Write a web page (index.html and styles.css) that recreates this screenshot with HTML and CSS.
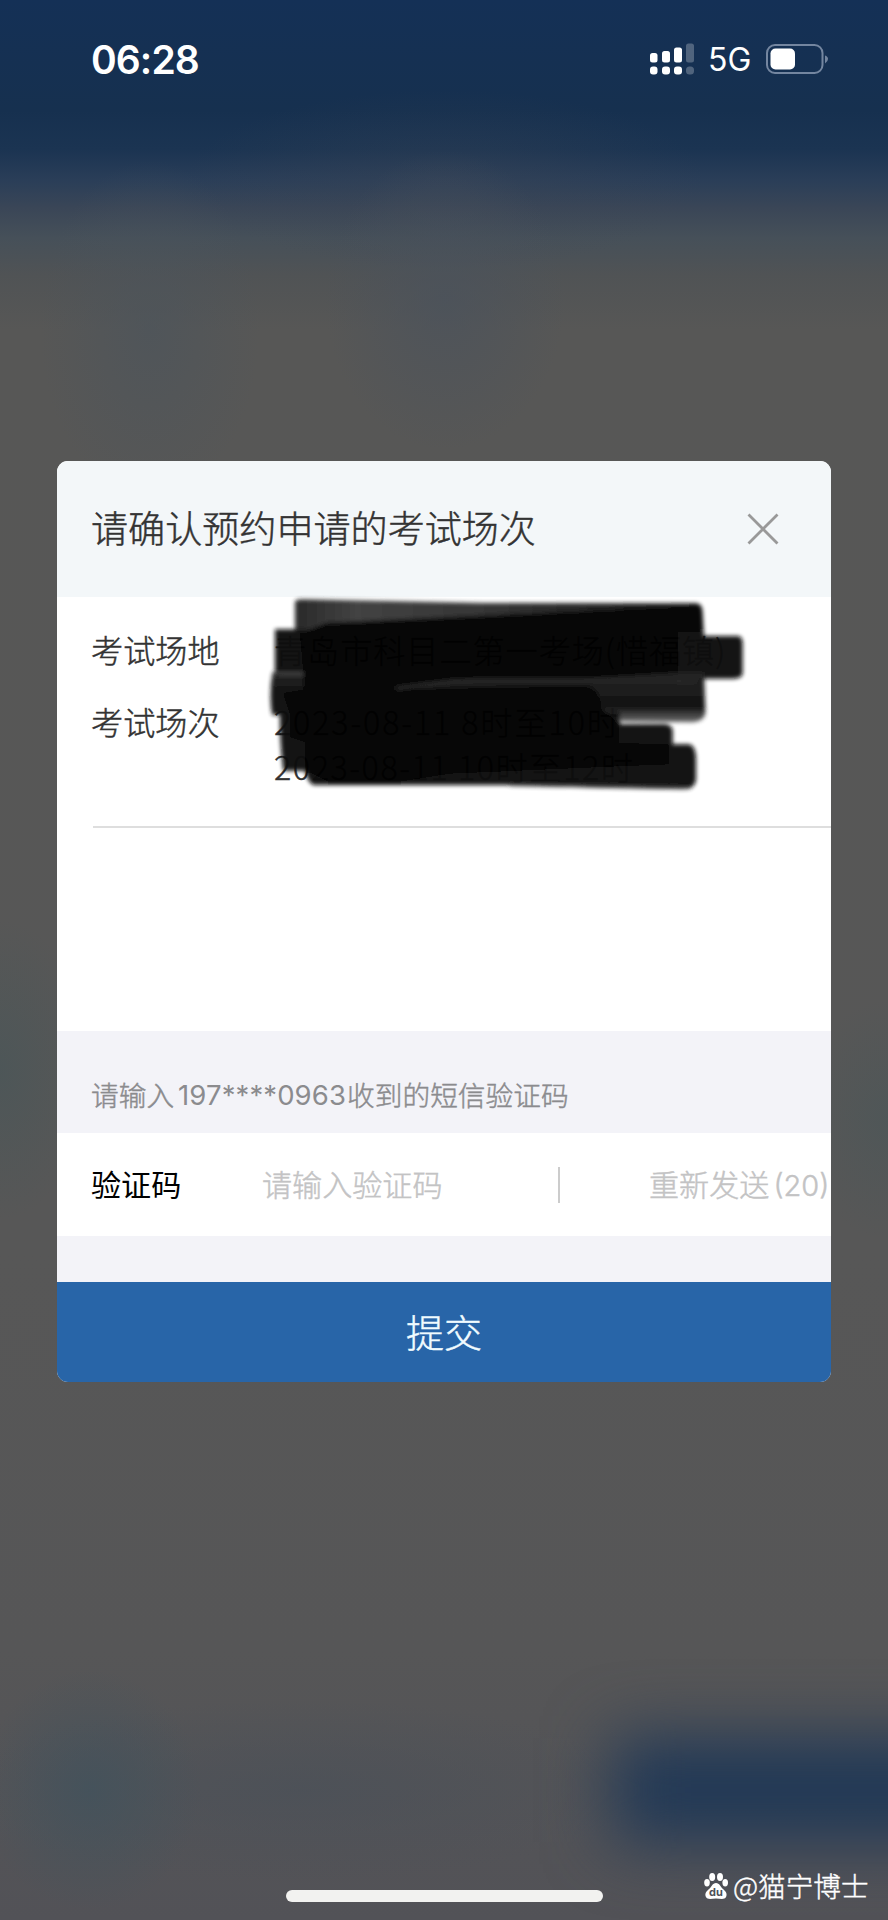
FILE: index.html
```html
<!DOCTYPE html>
<html lang="zh-CN">
<head>
<meta charset="utf-8">
<title>预约申请</title>
<link rel="stylesheet" href="styles.css">
</head>
<body>
<div class="screen">
  <div class="backdrop"><div class="glow glow-button"></div></div>
  <header class="status">
    <span class="time">06:28</span>
    <div class="status-right">
      <svg class="signal" width="46" height="32" viewBox="0 0 46 32" fill="#fff">
        <rect x="0" y="10" width="7.5" height="9.5" rx="2.5"/><rect x="0" y="23.500" width="7.500" height="8" rx="3"/>
        <rect x="12" y="8" width="8" height="11.500" rx="2.500"/><rect x="12" y="23.500" width="8" height="8" rx="3"/>
        <rect x="24" y="4.500" width="8" height="15" rx="2.500"/><rect x="24" y="23.500" width="8" height="8" rx="3"/>
        <g opacity=".25"><rect x="36" y="0.500" width="8" height="19" rx="2.500"/><rect x="36" y="23.500" width="8" height="8" rx="3.500"/></g>
      </svg>
      <span class="network">5G</span>
      <svg class="battery" width="64" height="32" viewBox="0 0 64 32">
        <rect x="1" y="2" width="55.500" height="28" rx="8" fill="none" stroke="#7486a0" stroke-width="2"/>
        <rect x="4.500" y="5.500" width="24.500" height="21" rx="5" fill="#fff"/>
        <path d="M59 12.500Q62 13.500 62 16T59 20.500Z" fill="#7486a0"/>
      </svg>
    </div>
  </header>

  <main class="modal">
    <div class="modal-head">
      <h1 class="title">请确认预约申请的考试场次</h1>
      <svg class="close" width="32" height="32" viewBox="0 0 32 32"><path d="M1.500 1.500L30.500 30.500M30.500 1.500L1.500 30.500" stroke="#999" stroke-width="2.800" fill="none"/></svg>
    </div>
    <section class="details">
      <div class="row"><span class="label">考试场地</span><span class="value place">青岛市科目二第一考场(惜福镇)</span></div>
      <div class="row"><span class="label">考试场次</span><span class="value sessions"><span class="first">2023-08-11 8时至10时</span><span class="second">2023-08-11 10时至12时</span></span></div>
      <svg class="scribble" width="510" height="230" viewBox="0 0 1530 690">
        <defs>
          <filter id="soft" x="-5%" y="-5%" width="110%" height="110%"><feGaussianBlur stdDeviation="6"/></filter>
          <linearGradient id="top" x1="0" x2="1" y1="0" y2="0"><stop offset="0" stop-color="#242424"/><stop offset=".15" stop-color="#3c3c3c"/><stop offset=".5" stop-color="#2e2e2e"/><stop offset="1" stop-color="#0c0c0c"/></linearGradient>
          <linearGradient id="mid" x1="0" x2="0" y1="0" y2="1"><stop offset="0" stop-color="#1c1c1c"/><stop offset=".7" stop-color="#0d0d0d"/><stop offset=".82" stop-color="#333"/><stop offset="1" stop-color="#666"/></linearGradient>
        </defs>
        <g filter="url(#soft)">
          <path d="M135 65Q140 57 160 58L700 69L1340 70Q1358 72 1358 100L1362 172L135 172Z" fill="url(#top)"/>
          <path d="M75 148H600L1290 168H1465Q1478 170 1478 190V280Q1476 296 1450 296H75Z" fill="#0b0b0b"/>
          <path d="M68 276H1362L1366 395Q1366 422 1330 427L1040 424L66 405Q56 340 68 276Z" fill="url(#mid)"/>
          <path d="M68 320H300V404H68Z" fill="#080808"/>
          <path d="M90 395H1110V432H1245Q1268 434 1268 455V493H1318Q1338 498 1338 540V600Q1334 628 1300 628L1080 624L760 615H190Q174 608 165 572H100Q88 480 90 395Z" fill="#080808"/>
          <path d="M230 128L880 98L1350 78V155H1285V278L980 296L620 296L400 326L900 318H1010Q1050 325 1055 385L1105 432V490L1255 494V552L1100 558L600 580L380 615H260L165 570V485L120 470V400L100 340L160 330V275L150 160Z" fill="#000"/>
          <path d="M75 280L160 282" stroke="#444" stroke-width="7"/>
          <path d="M440 325Q600 300 760 300L1340 304" fill="none" stroke="#262626" stroke-width="8"/>
          <path d="M780 615L1320 624" stroke="#3a3a3a" stroke-width="6"/>
        </g>
      </svg>
      <div class="rule"></div>
    </section>
    <p class="hint">请输入<span class="phone">197****0963</span>收到的短信验证码</p>
    <div class="code-row">
      <span class="code-label">验证码</span>
      <span class="placeholder">请输入验证码</span>
      <span class="bar"></span>
      <span class="resend">重新发送<span class="count">(20)</span></span>
    </div>
    <div class="gap"></div>
    <div class="submit">提交</div>
  </main>

  <footer class="footer">
    <span class="home"></span>
    <div class="watermark">
      <svg class="paw" width="24" height="27" viewBox="0 0 24 27" fill="#fff">
        <ellipse cx="8.200" cy="4" rx="3" ry="4"/><ellipse cx="16" cy="4" rx="3" ry="4"/>
        <ellipse cx="3" cy="9.800" rx="2.800" ry="3.700"/><ellipse cx="21.200" cy="9.800" rx="2.800" ry="3.700"/>
        <path d="M12 10C15.500 10 16.500 14 19 16C22 18.500 23.500 21 22 24C20.500 27 16 25.500 12 25.500S3.500 27 2 24C.5 21 2 18.500 5 16C7.500 14 8.500 10 12 10Z"/>
        <text x="12" y="23" text-anchor="middle" class="paw-text">du</text>
      </svg>
      <span class="author">@猫宁博士</span>
    </div>
  </footer>
</div>
</body>
</html>
```
FILE: styles.css
```css
* { box-sizing: border-box; }
body { margin: 0; font-family: "Noto Sans CJK SC", sans-serif; font-weight: 300; }
.screen {
  position: relative;
  display: flex;
  flex-direction: column;
  width: 888px;
  height: 1920px;
  overflow: hidden;
}
.backdrop {
  position: absolute;
  inset: 0;
  overflow: hidden;
  background:
    radial-gradient(ellipse 110px 170px at 150px 330px, rgba(75, 84, 92, .6), transparent),
    radial-gradient(ellipse 120px 150px at 445px 300px, rgba(74, 82, 92, .7), transparent),
    radial-gradient(ellipse 260px 90px at 445px 180px, rgba(62, 70, 84, .35), transparent),
    radial-gradient(ellipse 90px 150px at 0 1070px, rgba(74, 86, 88, .75), transparent),
    radial-gradient(ellipse 90px 120px at 888px 1120px, rgba(74, 86, 88, .6), transparent),
    radial-gradient(ellipse 110px 120px at 90px 1790px, rgba(66, 82, 92, .8), transparent),
    radial-gradient(ellipse 340px 90px at 300px 1790px, rgba(74, 80, 88, .7), transparent),
    linear-gradient(#143056 0, #16304f 110px, #1b3452 150px, #2a3e58 180px, #3a4657 208px, #465059 238px, #505355 275px, #575756 330px, #575757 1250px, #565657 1650px, #525257 1920px);
}
.glow-button {
  position: absolute;
  left: 612px;
  top: 1738px;
  width: 360px;
  height: 104px;
  background: #203856;
  filter: blur(33px);
}
.status {
  position: relative;
  display: flex;
  justify-content: space-between;
  align-items: center;
  height: 118px;
  padding: 0 58px 0 91px;
  color: #fff;
  font-family: Inter, sans-serif;
}
.time { font-size: 39px; font-weight: 600; letter-spacing: -.9px; }
.status-right { display: flex; align-items: center; }
.network { width: 58px; margin-left: 12px; font-size: 32px; font-weight: 400; line-height: 32px; padding-top: 2px; }
.modal {
  position: relative;
  width: 774px;
  height: 921px;
  margin: 343px 0 0 57px;
  border-radius: 11px;
  overflow: hidden;
  background: #fff;
  -webkit-text-stroke: .45px currentColor;
}
.modal-head {
  display: flex;
  align-items: center;
  justify-content: space-between;
  height: 136px;
  padding: 0 52px 0 34px;
  background: #f3f7f9;
}
.title { margin: -4px 0 0; font-size: 37.1px; font-weight: inherit; line-height: 54px; color: #333; }
.details { position: relative; height: 434px; padding-top: 30px; color: #333; font-size: 32.2px; line-height: 45px; }
.row { display: flex; padding-left: 34px; margin-bottom: 27px; white-space: nowrap; }
.label { width: 183px; }
.place { letter-spacing: .9px; }
.sessions { display: flex; flex-direction: column; }
.first { letter-spacing: 1.9px; }
.second { letter-spacing: 1.6px; }
.scribble { position: absolute; left: 193px; top: -17px; opacity: .97; }
.rule { height: 2px; margin: 37px 0 0 36px; background: #dedede; }
.hint {
  display: flex;
  align-items: center;
  height: 102px;
  margin: 0;
  padding: 24px 0 0 34px;
  background: #f3f3f8;
  color: #8b8b8e;
  font-size: 27.7px;
  line-height: 40px;
}
.phone { width: 173px; padding: 2px 0 0 4px; font-family: Inter, sans-serif; font-size: 27.5px; font-weight: 400; letter-spacing: .1px; -webkit-text-stroke: 0; }
.code-row { display: flex; align-items: center; height: 103px; padding-left: 34px; font-size: 30.1px; white-space: nowrap; }
.code-label, .placeholder, .resend { margin-top: -3px; }
.code-label { width: 171px; color: #000; font-weight: 400; -webkit-text-stroke: 0; }
.placeholder { width: 296px; color: #c3c3c4; }
.bar { width: 2px; height: 36px; background: #ccc; }
.resend { margin-left: 89px; color: #c3c3c4; }
.count { margin-left: 4px; font-family: Inter, sans-serif; font-size: 29px; }
.gap { height: 46px; background: #f3f3f8; }
.submit { height: 100px; background: #2865a8; color: #f0fbff; font-size: 38px; line-height: 98px; text-align: center; }
.footer { position: relative; display: flex; align-items: center; margin-top: 484px; padding-left: 286px; height: 42px; }
.home { width: 317px; height: 12px; margin-top: 18px; border-radius: 6px; background: #f2f2f0; }
.watermark { display: flex; align-items: center; margin: -2px 0 0 101px; height: 42px; color: #fff; }
.author { margin: -3px 0 0 5px; font-size: 27.6px; line-height: 40px; white-space: nowrap; -webkit-text-stroke: .4px #fff; }
.paw-text { font: 700 11px Inter, sans-serif; fill: #4c5058; }
```
